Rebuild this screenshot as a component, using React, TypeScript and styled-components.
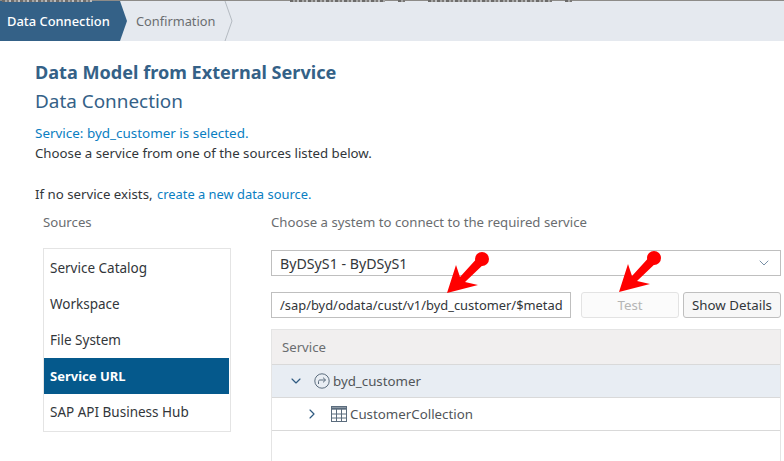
import styled, { createGlobalStyle } from "styled-components";
import { ChevronDown, ChevronRight } from "lucide-react";

const GlobalStyle = createGlobalStyle`
  html, body {
    margin: 0;
    padding: 0;
    background: #fff;
  }
  body {
    font-family: "Noto Sans", "Open Sans", sans-serif;
    font-size: 14px;
    color: #32363a;
  }
`;

const Page = styled.div`
  width: 784px;
  height: 461px;
  overflow: hidden;
  position: relative;
  background: #fff;
`;

const TopEdge = styled.div`
  height: 1px;
  background: #8d8b88;
`;

// bottoms of the cut-off text of the window above the bar
const CutText = styled.div<{ $left: number; $width: number }>`
  position: absolute;
  top: 0;
  left: ${p => p.$left}px;
  width: ${p => p.$width}px;
  height: 2px;
  background: repeating-linear-gradient(90deg, #6b6a69 0 3px, #a5a5a4 3px 5px, #7a7876 5px 7px, #bcbdbe 7px 9px);
`;

const StepBar = styled.div`
  height: 40px;
  display: flex;
  background: #e5e9ef;
`;

const ActiveStep = styled.div`
  width: 127px;
  padding-left: 7px;
  box-sizing: border-box;
  display: flex;
  align-items: center;
  background: #346187;
  color: #fff;
  font-weight: 500;
  font-size: 12.9px;
  clip-path: polygon(0 0, 120px 0, 127px 50%, 120px 100%, 0 100%);
`;

const NextStep = styled.div`
  width: 106px;
  padding-left: 9px;
  box-sizing: border-box;
  display: flex;
  align-items: center;
  justify-content: space-between;
  color: #6a6d70;
  font-size: 12.8px;
`;

const Content = styled.div`
  padding: 19px 3px 0 35px;
`;

const Title = styled.h1`
  margin: 0;
  font-size: 18.1px;
  line-height: 24px;
  font-weight: 700;
  color: #346187;
`;

const Subtitle = styled.h2`
  margin: 5px 0 0;
  font-size: 18.9px;
  line-height: 24px;
  font-weight: 400;
  color: #346187;
`;

const Line = styled.div<{ $gap?: number }>`
  margin-top: ${p => p.$gap ?? 0}px;
  font-size: 13.25px;
  line-height: 20px;
  color: #32363a;
`;

const Blue = styled.span`
  color: #0a7ec2;
  font-size: 13.45px;
`;

const SourceLink = styled.span`
  margin-left: 1px;
  color: #0a7ec2;
  font-size: 12.9px;
`;

const Columns = styled.div`
  margin-top: 8px;
  display: flex;
`;

const Left = styled.div`
  flex: none;
  width: 188px;
  margin-left: 8px;
  margin-right: 40px;
`;

const Right = styled.div`
  flex: 1;
  min-width: 0;
`;

const ColumnLabel = styled.div`
  font-size: 13.2px;
  line-height: 20px;
  color: #6a6d70;
`;

const SourceList = styled.ul`
  list-style: none;
  margin: 16px 0 0;
  padding: 1px 1px 1px 0;
  border: 1px solid #e4e4e4;
`;

const SourceItem = styled.li<{ $active?: boolean }>`
  height: 36px;
  display: flex;
  align-items: center;
  padding-left: 6px;
  font-size: ${p => (p.$active ? 13 : 13.5)}px;
  font-weight: ${p => (p.$active ? 700 : 400)};
  background: ${p => (p.$active ? "#05598c" : "transparent")};
  color: ${p => (p.$active ? "#fff" : "#32363a")};
`;

const SelectBox = styled.div`
  margin-top: 18px;
  height: 26px;
  box-sizing: border-box;
  border: 1px solid #bfbfbf;
  padding: 0 8px;
  display: flex;
  align-items: center;
  justify-content: space-between;
  font-size: 14.2px;
`;

const Controls = styled.div`
  margin-top: 16px;
  display: flex;
`;

const UrlInput = styled.div`
  flex: none;
  width: 300px;
  height: 26px;
  box-sizing: border-box;
  border: 1px solid #bfbfbf;
  padding: 0 8px;
  display: flex;
  align-items: center;
  font-size: 12.9px;
  white-space: nowrap;
  overflow: hidden;
`;

const Button = styled.button<{ $width: number; $ghost?: boolean }>`
  flex: none;
  width: ${p => p.$width}px;
  height: 26px;
  padding: 0;
  box-sizing: border-box;
  background: ${p => (p.$ghost ? "#fbfbfb" : "#f7f7f7")};
  border: 1px solid ${p => (p.$ghost ? "#e3e3e3" : "#bfbfbf")};
  border-radius: 3px;
  color: ${p => (p.$ghost ? "#b5b5b5" : "#32363a")};
  font-family: inherit;
  font-size: 13.3px;
`;

const TestButton = styled(Button)`
  margin-left: 10px;
`;

const DetailsButton = styled(Button)`
  margin-left: 4px;
`;

const Table = styled.div`
  margin-top: 11px;
  height: 140px;
  border: 1px solid #e4e4e4;
  border-bottom: 0;
`;

const TableHead = styled.div`
  height: 34px;
  display: flex;
  align-items: center;
  padding-left: 10px;
  background: #f1efef;
  color: #6a6d70;
  font-size: 13.2px;
  border-bottom: 1px solid #d9d9d9;
`;

const TreeRow = styled.div<{ $indent: number; $selected?: boolean }>`
  height: 32px;
  display: flex;
  align-items: center;
  padding-left: ${p => p.$indent}px;
  background: ${p => (p.$selected ? "#e8edf3" : "#fff")};
  border-bottom: 1px solid #d9d9d9;
  font-size: 13.3px;
  color: #515559;
`;

const Arrow = styled.svg<{ $left: number; $top: number }>`
  position: absolute;
  left: ${p => p.$left}px;
  top: ${p => p.$top}px;
`;

function ServiceIcon() {
  return (
    <svg width="16" height="16" viewBox="0 0 16 16" fill="none" stroke="#5b6c7d" strokeWidth="1" style={{ margin: "0 3px 0 10px" }}>
      <circle cx="8" cy="8" r="7.2" />
      <path d="M4.5 11V8.5C4.5 7.6 5 7 6 7H11.5M9 4.6L11.5 7L9 9.4" />
    </svg>
  );
}

function TableIcon() {
  return (
    <svg width="16" height="16" viewBox="0 0 16 16" fill="none" stroke="#5b6c7d" strokeWidth="1" style={{ margin: "0 3px 0 11px" }}>
      <rect x="0.5" y="0.5" width="15" height="15" />
      <path d="M0.5 2.5H15.5" strokeWidth="2.4" />
      <path d="M0.5 8H15.5M0.5 12H15.5M5.5 3V15.5M10.5 3V15.5" />
    </svg>
  );
}

function RedArrow({ left, top }: { left: number; top: number }) {
  return (
    <Arrow $left={left} $top={top} width="44" height="44" viewBox="0 0 44 44">
      <circle cx="35" cy="9" r="7" fill="#f00" />
      <path d="M33 5L39 12L18 32L31 35L0 43L9 15L13 27Z" fill="#f00" />
    </Arrow>
  );
}

export default function App() {
  return (
    <Page>
      <GlobalStyle />
      <TopEdge />
      <StepBar>
        <ActiveStep>Data Connection</ActiveStep>
        <NextStep>
          Confirmation
          <svg width="9" height="40" viewBox="0 0 9 40" fill="none" stroke="#b4bac1">
            <path d="M1 0L8 20L1 40" />
          </svg>
        </NextStep>
      </StepBar>
      <CutText $left={2} $width={90} />
      <CutText $left={290} $width={95} />
      <CutText $left={398} $width={7} />
      <CutText $left={428} $width={124} />
      <CutText $left={565} $width={7} />
      <Content>
        <Title>Data Model from External Service</Title>
        <Subtitle>Data Connection</Subtitle>
        <Line $gap={10}><Blue>Service: byd_customer is selected.</Blue></Line>
        <Line>Choose a service from one of the sources listed below.</Line>
        <Line $gap={21}>If no service exists, <SourceLink>create a new data source.</SourceLink></Line>
        <Columns>
          <Left>
            <ColumnLabel>Sources</ColumnLabel>
            <SourceList>
              <SourceItem>Service Catalog</SourceItem>
              <SourceItem>Workspace</SourceItem>
              <SourceItem>File System</SourceItem>
              <SourceItem $active>Service URL</SourceItem>
              <SourceItem>SAP API Business Hub</SourceItem>
            </SourceList>
          </Left>
          <Right>
            <ColumnLabel>Choose a system to connect to the required service</ColumnLabel>
            <SelectBox>
              ByDSyS1 - ByDSyS1
              <ChevronDown size={16} strokeWidth={1} color="#35587a" />
            </SelectBox>
            <Controls>
              <UrlInput>/sap/byd/odata/cust/v1/byd_customer/$metad</UrlInput>
              <TestButton $width={98} $ghost>Test</TestButton>
              <DetailsButton $width={98}>Show Details</DetailsButton>
            </Controls>
            <Table>
              <TableHead>Service</TableHead>
              <TreeRow $indent={16} $selected>
                <ChevronDown size={16} strokeWidth={1.75} color="#2f5a80" />
                <ServiceIcon />
                byd_customer
              </TreeRow>
              <TreeRow $indent={32}>
                <ChevronRight size={16} strokeWidth={1.75} color="#2f5a80" />
                <TableIcon />
                CustomerCollection
              </TreeRow>
            </Table>
          </Right>
        </Columns>
      </Content>
      <RedArrow left={447} top={250} />
      <RedArrow left={619} top={249} />
    </Page>
  );
}
